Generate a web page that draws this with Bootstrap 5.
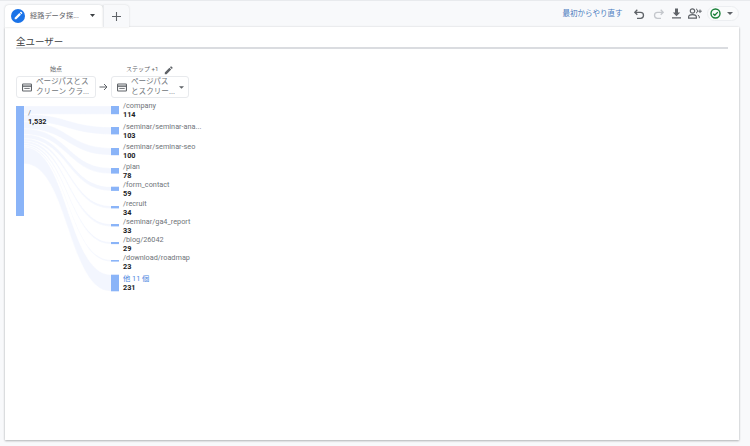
<!DOCTYPE html>
<html lang="ja">
<head>
<meta charset="utf-8">
<title>経路データ探索</title>
<link href="https://cdn.jsdelivr.net/npm/bootstrap@5.3.0/dist/css/bootstrap.min.css" rel="stylesheet">
<style>
html,body{height:446px;overflow:hidden}
body{background:#f8f9fb;font-family:Roboto,"Noto Sans CJK JP",sans-serif;color:#5f6368;border-top:1px solid #e8eaed;padding:4px 11px 6px 5px;display:flex;flex-direction:column}
.tabbar{height:22px;flex:none}
.gtab{background:#fff;border-radius:4px 4px 0 0;height:22px;box-shadow:0 0 2px rgba(60,64,67,.25);position:relative;z-index:1}
.gtab-main{width:98px;padding:0 6px;font-size:7.2px;color:#5f6368}
.gtab-main .tname{margin-left:5px;width:55px;white-space:nowrap}
.gtab-main .tcaret{margin-left:5px;margin-top:-2px}
.gtab-plus{width:26px;background:#f8f9fb;border-left:1px solid #e8eaed;box-shadow:0 0 2px rgba(60,64,67,.2);border-radius:0 4px 0 0}
.pen{width:14px;height:14px;flex:none}
.tools{padding-right:0;margin-top:1px}
.redo-link{color:#4a7bc0;font-size:7.5px;white-space:nowrap;margin-right:8px}
.tool{width:18.4px;height:14px}
.statuspill{width:32px;height:15px;border:1px solid #eceef1;border-radius:8px;margin-left:3px;margin-right:0;background:#fafbfc;gap:6px;padding-left:2px}
.sheet{background:#fff;flex:1;position:relative;box-shadow:0 1px 2px rgba(60,64,67,.35),0 0 2px rgba(60,64,67,.12);padding:10px 11px 0 11px}
.sheet-title{font-size:9.5px;line-height:10px;color:#3c4043;padding-bottom:0;border-bottom:2px solid #dadce0;font-weight:400;margin:0}
.cols{margin-top:17px;height:35px}
.colbox{display:flex;flex-direction:column;align-items:stretch}
.collabel{font-size:6px;line-height:6px;height:10px;text-align:center;color:#5f6368}
.col-first{width:80px}
.col-second{width:78px}
.arrowcell{width:15px;padding-top:17px}
.dim{height:22px;border:1px solid #e8eaed;border-radius:3px;background:#fff;font-size:7.6px;line-height:10px;color:#70757a;padding-left:5px}
.dim .dtext{margin-left:4px;white-space:nowrap}
.labelrow{gap:6px;padding-left:15px;justify-content:flex-start}
.canvas{position:relative;height:200px;margin-top:-1px}
.canvas svg.sk{position:absolute;left:0;top:0;width:220px;height:200px}
.node{position:absolute;font-size:7.3px;line-height:9px;white-space:nowrap;color:#70757a}
.node b{display:block;color:#202124;font-weight:700}
.node .other{color:#4a86e0}
</style>
</head>
<body>
<div class="tabbar d-flex align-items-start">
  <div class="gtab gtab-main d-flex align-items-center">
    <svg class="pen" viewBox="0 0 16 16"><circle cx="8" cy="8" r="8" fill="#1a73e8"/><path d="M4.200 11.800v-1.900l5.300-5.300 1.900 1.900-5.300 5.300zM10.100 4l.8-.8a.5.5 0 0 1 .7 0l1.200 1.200a.5.5 0 0 1 0 .7l-.8.8z" fill="#fff"/></svg>
    <span class="tname">経路データ探...</span>
    <svg class="tcaret" width="5" height="3" viewBox="0 0 7 4"><path d="M0 0h7L3.500 4z" fill="#3c4043"/></svg>
  </div>
  <div class="gtab gtab-plus d-flex align-items-center justify-content-center">
    <svg width="9" height="9" viewBox="0 0 10 10"><path d="M5 0v10M0 5h10" stroke="#5f6368" stroke-width="1.200"/></svg>
  </div>
  <div class="tools ms-auto d-flex align-items-center">
    <span class="redo-link">最初からやり直す</span>
    <div class="tool d-flex align-items-center justify-content-center"><svg width="11" height="10" viewBox="0 0 11 10"><path d="M3.300.8.800 3.300l2.500 2.500M1 3.300h5.500a3 3 0 0 1 0 6H3" fill="none" stroke="#5f6368" stroke-width="1.300"/></svg></div>
    <div class="tool d-flex align-items-center justify-content-center"><svg width="11" height="10" viewBox="0 0 11 10"><path d="M7.700.8l2.500 2.500-2.500 2.500M10 3.300H4.500a3 3 0 0 0 0 6H8" fill="none" stroke="#c4c7cc" stroke-width="1.300"/></svg></div>
    <div class="tool d-flex align-items-center justify-content-center"><svg width="11" height="11" viewBox="0 0 11 11"><path d="M4 .5h3v4h2.200L5.500 8.200 1.800 4.500H4zM1 9.300h9v1.300H1z" fill="#5f6368"/></svg></div>
    <div class="tool d-flex align-items-center justify-content-center"><svg width="14" height="11" viewBox="0 0 14 11"><circle cx="4.500" cy="3" r="2.200" fill="none" stroke="#5f6368" stroke-width="1.200"/><path d="M.6 10.200V9c0-1.500 2.300-2.300 3.900-2.300S8.400 7.500 8.400 9v1.200z" fill="none" stroke="#5f6368" stroke-width="1.200"/><path d="M8 .9a2.200 2.200 0 0 1 0 4.200M9.800 7c1 .4 1.500 1.100 1.500 2v1.200" fill="none" stroke="#5f6368" stroke-width="1"/><path d="M12 1.500v3.500M10.300 3.200h3.500" stroke="#5f6368" stroke-width="1"/></svg></div>
    <div class="statuspill d-flex align-items-center">
      <svg width="11" height="11" viewBox="0 0 11 11"><circle cx="5.500" cy="5.500" r="4.500" fill="none" stroke="#188038" stroke-width="1.400"/><path d="M3.200 5.700l1.600 1.600 3-3.200" fill="none" stroke="#188038" stroke-width="1.300"/></svg>
      <svg width="6" height="3" viewBox="0 0 6 3"><path d="M0 0h6L3 3z" fill="#5f6368"/></svg>
    </div>
  </div>
</div>
<main class="sheet">
  <h1 class="sheet-title">全ユーザー</h1>
  <div class="cols d-flex align-items-start">
    <div class="colbox col-first">
      <div class="collabel">始点</div>
      <div class="dim d-flex align-items-center">
        <svg width="10" height="9" viewBox="0 0 11 9" class="flex-shrink-0"><rect x=".6" y=".6" width="9.800" height="7.800" rx=".8" fill="none" stroke="#5f6368" stroke-width="1.200"/><path d="M1 3h9" stroke="#5f6368" stroke-width="1.500"/><path d="M2.500 5.500h6" stroke="#5f6368" stroke-width="1"/></svg>
        <span class="dtext">ページパスとス<br>クリーン クラ...</span>
      </div>
    </div>
    <div class="arrowcell d-flex justify-content-center">
      <svg width="9" height="8" viewBox="0 0 9 8"><path d="M.5 4h7.500M5 1l3 3-3 3" fill="none" stroke="#5f6368" stroke-width="1"/></svg>
    </div>
    <div class="colbox col-second">
      <div class="collabel d-flex labelrow align-items-start">ステップ +1
        <svg width="9" height="9" viewBox="0 0 9 9" class="flex-shrink-0"><path d="M.8 8.200V6.400l4.600-4.600 1.800 1.800-4.600 4.600zM6 1.200 6.700.5a.5.500 0 0 1 .7 0l1.100 1.100a.5.500 0 0 1 0 .7l-.7.700z" fill="#5f6368"/></svg>
      </div>
      <div class="dim d-flex align-items-center">
        <svg width="10" height="9" viewBox="0 0 11 9" class="flex-shrink-0"><rect x=".6" y=".6" width="9.800" height="7.800" rx=".8" fill="none" stroke="#5f6368" stroke-width="1.200"/><path d="M1 3h9" stroke="#5f6368" stroke-width="1.500"/><path d="M2.500 5.500h6" stroke="#5f6368" stroke-width="1"/></svg>
        <span class="dtext">ページパス<br>とスクリー...</span>
        <svg width="5" height="3" viewBox="0 0 6 3" class="ms-auto me-1 flex-shrink-0"><path d="M0 0h6L3 3z" fill="#5f6368"/></svg>
      </div>
    </div>
  </div>
  <div class="canvas">
    <svg class="sk" viewBox="11 0 220 200">
      <g fill="#f3f6fe" stroke="#fff" stroke-width=".4" transform="translate(0,-100)">
        <path d="M19 106C63 106 63 106 106 106V114.200C63 114.200 63 114.200 19 114.200Z"/>
        <path d="M19 114.200C63 114.200 63 127 106 127V134.400C63 134.400 63 121.600 19 121.600Z"/>
        <path d="M19 121.600C63 121.600 63 148 106 148V155.200C63 155.200 63 128.800 19 128.800Z"/>
        <path d="M19 128.800C63 128.800 63 168 106 168V173.600C63 173.600 63 134.400 19 134.400Z"/>
        <path d="M19 134.400C63 134.400 63 186.700 106 186.700V190.900C63 190.900 63 138.600 19 138.600Z"/>
        <path d="M19 138.600C63 138.600 63 206 106 206V208.400C63 208.400 63 141 19 141Z"/>
        <path d="M19 141C63 141 63 224 106 224V226.400C63 226.400 63 143.400 19 143.400Z"/>
        <path d="M19 143.400C63 143.400 63 242 106 242V244.100C63 244.100 63 145.500 19 145.500Z"/>
        <path d="M19 145.500C63 145.500 63 260 106 260V261.600C63 261.600 63 147.100 19 147.100Z"/>
        <path d="M19 147.100C63 147.100 63 274.700 106 274.700V291.300C63 291.300 63 163.700 19 163.700Z"/>
      </g>
      <g fill="#8ab4f8">
        <rect x="11" y="6" width="8" height="110"/>
        <rect x="106" y="6" width="8" height="8.200"/>
        <rect x="106" y="27" width="8" height="7.400"/>
        <rect x="106" y="48" width="8" height="7.200"/>
        <rect x="106" y="68" width="8" height="5.600"/>
        <rect x="106" y="86.700" width="8" height="4.200"/>
        <rect x="106" y="106" width="8" height="2.400"/>
        <rect x="106" y="124" width="8" height="2.400"/>
        <rect x="106" y="142" width="8" height="2.100"/>
        <rect x="106" y="160" width="8" height="1.600"/>
        <rect x="106" y="174.700" width="8" height="16.600"/>
      </g>
    </svg>
    <div class="node" style="left:12px;top:8px">/<b>1,532</b></div>
    <div class="node" style="left:107px;top:1px">/company<b>114</b></div>
    <div class="node" style="left:107px;top:22px">/seminar/seminar-ana...<b>103</b></div>
    <div class="node" style="left:107px;top:42px">/seminar/seminar-seo<b>100</b></div>
    <div class="node" style="left:107px;top:62px">/plan<b>78</b></div>
    <div class="node" style="left:107px;top:80px">/form_contact<b>59</b></div>
    <div class="node" style="left:107px;top:99px">/recruit<b>34</b></div>
    <div class="node" style="left:107px;top:117px">/seminar/ga4_report<b>33</b></div>
    <div class="node" style="left:107px;top:135px">/blog/26042<b>29</b></div>
    <div class="node" style="left:107px;top:153px">/download/roadmap<b>23</b></div>
    <div class="node" style="left:107px;top:174px"><span class="other">他 11 個</span><b>231</b></div>
  </div>
</main>
</body>
</html>
